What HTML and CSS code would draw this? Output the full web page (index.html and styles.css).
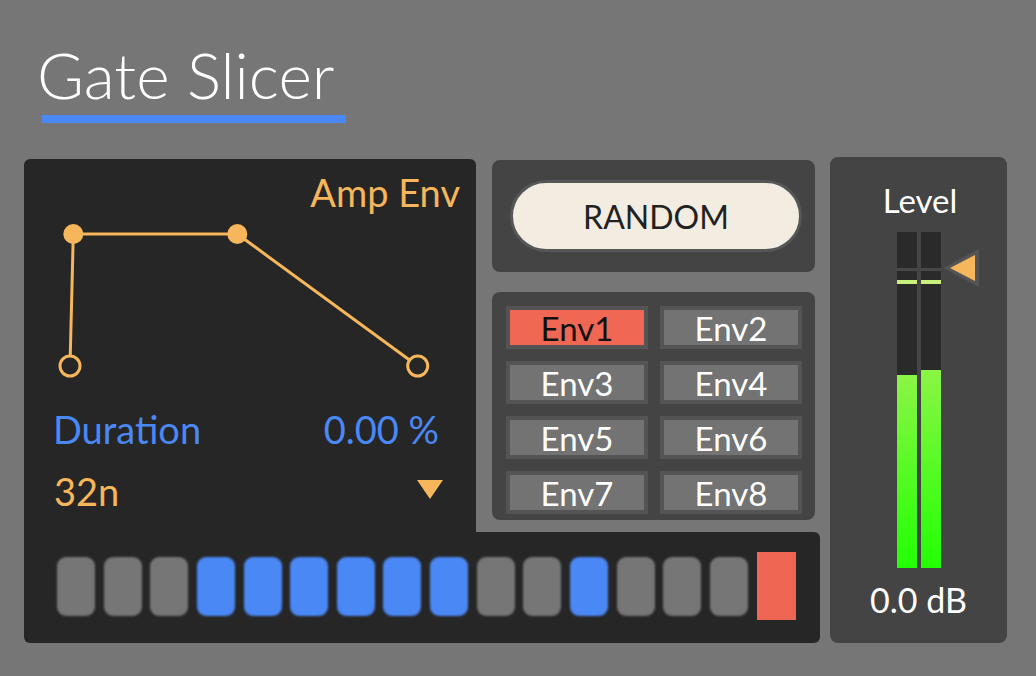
FILE: index.html
```html
<!DOCTYPE html>
<html lang="en">
<head>
<meta charset="utf-8">
<title>Gate Slicer</title>
<link rel="stylesheet" href="styles.css">
</head>
<body>
<div class="app">
  <header class="header">
    <h1 class="title">Gate Slicer</h1>
    <div class="title-line"></div>
  </header>
  <main class="main">
    <div class="left">
      <div class="upper">
        <section class="env-panel">
          <div class="env-label">Amp Env</div>
          <svg class="env-graph" width="452" height="192" viewBox="0 0 452 192">
            <polyline points="46,151 49.3,19 213.3,19 393.7,151" fill="none" stroke="#f5b65c" stroke-width="3" stroke-linejoin="round"/>
            <circle cx="49.3" cy="19" r="10" fill="#f5b65c"/>
            <circle cx="213.3" cy="19" r="10" fill="#f5b65c"/>
            <circle cx="46" cy="151" r="10" fill="#262626" stroke="#f5b65c" stroke-width="3"/>
            <circle cx="393.7" cy="151" r="10" fill="#262626" stroke="#f5b65c" stroke-width="3"/>
          </svg>
          <div class="dur-row"><span>Duration</span><span>0.00 %</span></div>
          <div class="rate-row"><span>32n</span><span class="rate-tri"></span></div>
        </section>
        <div class="mid">
          <section class="random-panel"><button class="random-btn">RANDOM</button></section>
          <section class="envs-panel">
            <div class="env-btn active">Env1</div>
            <div class="env-btn">Env2</div>
            <div class="env-btn">Env3</div>
            <div class="env-btn">Env4</div>
            <div class="env-btn">Env5</div>
            <div class="env-btn">Env6</div>
            <div class="env-btn">Env7</div>
            <div class="env-btn">Env8</div>
          </section>
        </div>
      </div>
      <section class="steps">
        <div class="step"></div>
        <div class="step"></div>
        <div class="step"></div>
        <div class="step on"></div>
        <div class="step on"></div>
        <div class="step on"></div>
        <div class="step on"></div>
        <div class="step on"></div>
        <div class="step on"></div>
        <div class="step"></div>
        <div class="step"></div>
        <div class="step on"></div>
        <div class="step"></div>
        <div class="step"></div>
        <div class="step"></div>
        <div class="step-end"></div>
      </section>
    </div>
    <aside class="level-panel">
      <div class="level-label">Level</div>
      <div class="meter">
        <div class="bar">
          <div class="seg-top"></div>
          <div class="seg-sep"></div>
          <div class="seg-gap"></div>
          <div class="seg-peak"></div>
          <div class="seg-fill"></div>
          <div class="seg-level" style="height:193px"></div>
        </div>
        <div class="bar">
          <div class="seg-top"></div>
          <div class="seg-sep"></div>
          <div class="seg-gap"></div>
          <div class="seg-peak"></div>
          <div class="seg-fill"></div>
          <div class="seg-level" style="height:198px"></div>
        </div>
        <svg class="meter-marker" width="36" height="38" viewBox="0 0 36 38">
          <polygon points="0,19 36,0 36,38" fill="#545454"/>
          <polygon points="7,19 32,6 32,32" fill="#f5b65c"/>
        </svg>
      </div>
      <div class="db-label">0.0 dB</div>
    </aside>
  </main>
</div>
</body>
</html>
```

FILE: styles.css
```css
html, body {
  margin: 0;
  padding: 0;
}

body {
  width: 1036px;
  height: 676px;
  overflow: hidden;
  background: #767676;
  font-family: Lato, "Noto Sans", sans-serif;
  font-weight: 400;
  color: #fff;
}

.header {
  height: 157px;
  box-sizing: border-box;
  padding: 37px 0 0 37px;
}

.title {
  margin: 0;
  font-size: 64px;
  font-weight: 300;
  line-height: 1.2;
  color: #fff;
}

.title-line {
  margin-top: 1px;
  margin-left: 5px;
  width: 304px;
  height: 8px;
  background: #4a88f5;
}

.main {
  display: flex;
  align-items: flex-start;
  padding-left: 24px;
}

.left {
  width: 796px;
  margin-top: 2px;
}

.upper {
  display: flex;
  height: 373px;
}

.env-panel {
  width: 452px;
  box-sizing: border-box;
  background: #262626;
  border-radius: 6px 6px 0 0;
  padding-top: 10.5px;
  font-size: 38px;
  line-height: 1.2;
}

.env-label {
  text-align: right;
  padding-right: 16px;
  color: #f5b65c;
}

.env-graph {
  display: block;
}

.dur-row {
  display: flex;
  justify-content: space-between;
  padding: 0 37px 0 29px;
  color: #4a88f5;
}

.rate-row {
  display: flex;
  justify-content: space-between;
  align-items: flex-start;
  margin-top: 16.8px;
  padding: 0 33px 0 30px;
  color: #f5b65c;
}

.rate-tri {
  margin-top: 10.5px;
  width: 0;
  height: 0;
  border-left: 13.5px solid transparent;
  border-right: 13.5px solid transparent;
  border-top: 19px solid #f5b65c;
}

.mid {
  padding-left: 16px;
  margin-top: 1px;
}

.random-panel {
  width: 323px;
  height: 112px;
  box-sizing: border-box;
  background: #444;
  border-radius: 8px;
  padding: 20px 0 0 18px;
}

.random-btn {
  display: block;
  width: 292px;
  height: 72px;
  box-sizing: border-box;
  border: 3px solid #565656;
  border-radius: 36px;
  background: #f3ece1;
  color: #222;
  font-family: Lato, "Noto Sans", sans-serif;
  font-weight: 400;
  font-size: 32px;
  padding: 0;
}

.envs-panel {
  margin-top: 20px;
  width: 323px;
  height: 228px;
  box-sizing: border-box;
  background: #444;
  border-radius: 8px;
  padding: 14px 13px 0 14px;
  display: grid;
  grid-template-columns: 142px 142px;
  grid-auto-rows: 43px;
  column-gap: 12px;
  row-gap: 12px;
}

.env-btn {
  border: 4px solid #545454;
  background: #737373;
  color: #fff;
  font-size: 33px;
  line-height: 35px;
  text-align: center;
  padding-top: 1px;
  box-sizing: border-box;
}

.env-btn.active {
  background: #f06753;
  color: #111;
}

.steps {
  height: 111px;
  box-sizing: border-box;
  background: #262626;
  border-radius: 0 6px 6px 6px;
  display: flex;
  align-items: flex-start;
  gap: 8.65px;
  padding: 25px 0 0 33px;
}

.step {
  width: 38px;
  height: 59px;
  border-radius: 9px;
  background: #767676;
  filter: blur(1.2px);
}

.step.on {
  background: #4a88f5;
}

.step-end {
  width: 39px;
  height: 68px;
  margin-top: -5px;
  margin-left: 0.35px;
  background: #ef6753;
}

.level-panel {
  margin-left: 10px;
  width: 177px;
  height: 486px;
  box-sizing: border-box;
  background: #444;
  border-radius: 8px;
  padding-top: 24.4px;
}

.level-label {
  text-align: center;
  font-size: 33px;
  line-height: 1.2;
  padding-left: 3px;
}

.meter {
  position: relative;
  display: flex;
  gap: 4px;
  width: 44px;
  margin: 11px auto 0;
}

.bar {
  width: 20px;
  height: 336px;
  display: flex;
  flex-direction: column;
  background: #2a2a2a;
}

.seg-top {
  height: 36px;
}

.seg-sep {
  height: 3px;
  background: #474747;
}

.seg-gap {
  height: 9px;
}

.seg-peak {
  height: 4px;
  background: #c9f07c;
}

.seg-fill {
  flex: 1;
}

.seg-level {
  background: linear-gradient(#8bf545, #22ff04);
}

.meter-marker {
  position: absolute;
  left: 46px;
  top: 17px;
}

.db-label {
  text-align: center;
  font-size: 34px;
  line-height: 1.2;
  margin-top: 12.4px;
}
```
